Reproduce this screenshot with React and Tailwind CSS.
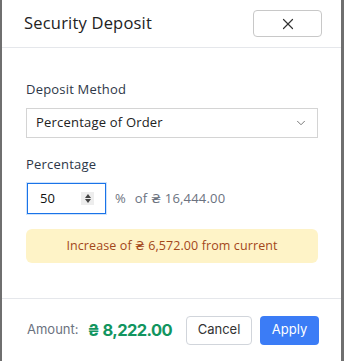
import { X, ChevronDown } from 'lucide-react'

const poppins = { fontFamily: '"Open Sans", "DejaVu Sans", sans-serif' }

export default function App() {
  return (
    <div className="w-[344px] h-[361px] bg-[#6f6f6f] flex overflow-hidden">
      <div className="ml-[2px] w-[339px] h-[361px] bg-white flex flex-col" style={poppins}>
        {/* header */}
        <div className="h-[48px] flex items-center justify-between pl-[22px] pr-[19px] border-b border-[#e5e7eb]">
          <h2 className="text-[16.5px] text-[#222] font-medium tracking-[0.2px]">Security Deposit</h2>
          <button className="w-[69px] h-[27px] border border-[#c8c8c8] rounded-[4px] flex items-center justify-center text-[#333]">
            <X size={18} strokeWidth={1.6} />
          </button>
        </div>

        {/* body */}
        <div className="flex-1 px-[24px] pt-[32px]">
          <label className="block text-[13px] text-[#2d3748] tracking-[0.2px] mb-[8px]">Deposit Method</label>
          <div className="h-[30px] w-[292px] border border-[#d4d4d4] flex items-center justify-between px-[9px] text-[13px] text-[#222] tracking-[0.2px]">
            <span>Percentage of Order</span>
            <ChevronDown size={14} strokeWidth={1.5} className="text-[#666]" />
          </div>

          <label className="block text-[13px] text-[#2d3748] tracking-[0.2px] mt-[17px] mb-[8px]">Percentage</label>
          <div className="flex items-center">
            <div className="w-[81px] h-[33px] border border-[#cfe3fb] flex">
              <div className="flex-1 border-[1.5px] border-[#1a73e8] flex items-center justify-between pl-[12px] pr-[11px]">
                <span className="text-[13px] text-[#111]">50</span>
                <span className="w-[13px] h-[13px] bg-[#ededed] flex flex-col items-center justify-center gap-[1px]">
                  <span className="w-0 h-0 border-l-[3.5px] border-r-[3.5px] border-b-[4px] border-l-transparent border-r-transparent border-b-[#444]" />
                  <span className="w-0 h-0 border-l-[3.5px] border-r-[3.5px] border-t-[4px] border-l-transparent border-r-transparent border-t-[#444]" />
                </span>
              </div>
            </div>
            <span className="ml-[8px] text-[13px] text-[#6b7280]">%</span>
            <span className="ml-[9px] text-[13px] text-[#6b7280] tracking-[0.2px]">of ₴ 16,444.00</span>
          </div>

          <div className="mt-[14px] w-[292px] h-[34px] bg-[#fef3c7] rounded-[6px] flex items-center justify-center text-[12.5px] text-[#a3471a] tracking-[0.1px]">
            Increase of ₴ 6,572.00 from current
          </div>
        </div>

        {/* footer */}
        <div className="h-[63px] border-t border-[#e5e7eb] flex items-center pl-[25px] pr-[22px] whitespace-nowrap" style={{ fontFamily: 'Inter, "DejaVu Sans", sans-serif' }}>
          <span className="text-[13px] text-[#6b7280]">Amount:</span>
          <span className="ml-[9px] text-[16.5px] font-bold tracking-[-0.6px] text-[#12955f]">₴ 8,222.00</span>
          <button className="ml-auto w-[66px] h-[29px] border border-[#d1d5db] rounded-[4px] text-[13px] text-[#333]">Cancel</button>
          <button className="ml-[8px] w-[59px] h-[29px] bg-[#3b7cf6] rounded-[4px] text-[13px] text-white">Apply</button>
        </div>
      </div>
    </div>
  )
}
